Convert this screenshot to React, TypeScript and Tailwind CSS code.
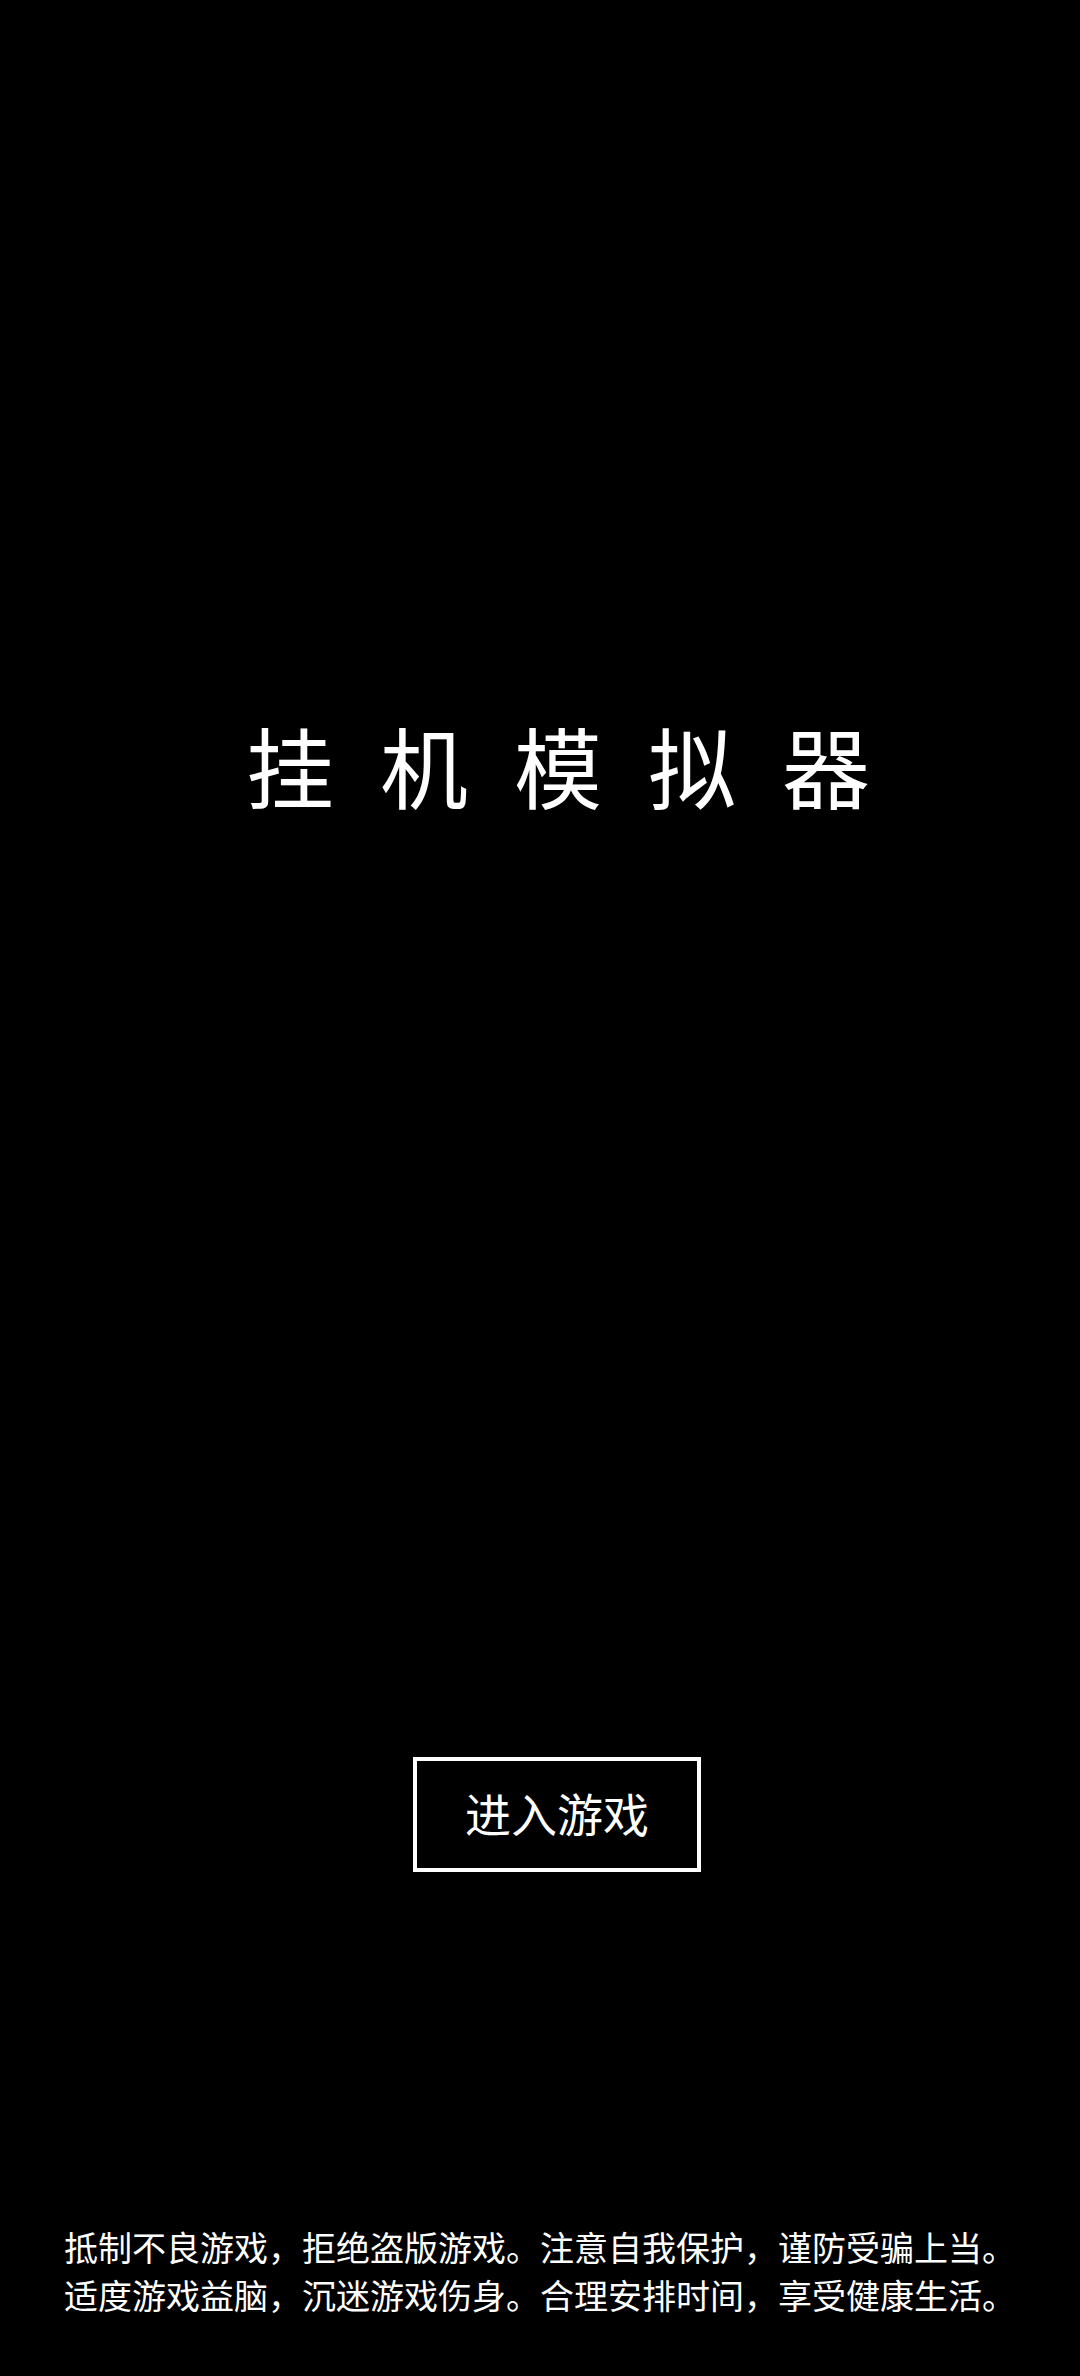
import React from "react";

export default function App() {
  return (
    <div
      className="w-[1080px] h-[2376px] bg-black text-white flex flex-col items-center overflow-hidden"
      style={{ fontFamily: '"Noto Sans CJK SC", "Noto Sans", sans-serif' }}
    >
      <div className="mt-[720px] h-[88px] text-[88px] leading-[88px] tracking-[46px] pl-[82px] whitespace-nowrap">
        挂机模拟器
      </div>
      <button className="mt-[949px] ml-[34px] w-[288px] h-[115px] border-4 border-white flex items-center justify-center pb-[6px] text-[46px] leading-none text-white">
        进入游戏
      </button>
      <div className="mt-[351px] text-[34px] leading-[48px] text-center whitespace-nowrap">
        <div>抵制不良游戏，拒绝盗版游戏。注意自我保护，谨防受骗上当。</div>
        <div>适度游戏益脑，沉迷游戏伤身。合理安排时间，享受健康生活。</div>
      </div>
    </div>
  );
}
